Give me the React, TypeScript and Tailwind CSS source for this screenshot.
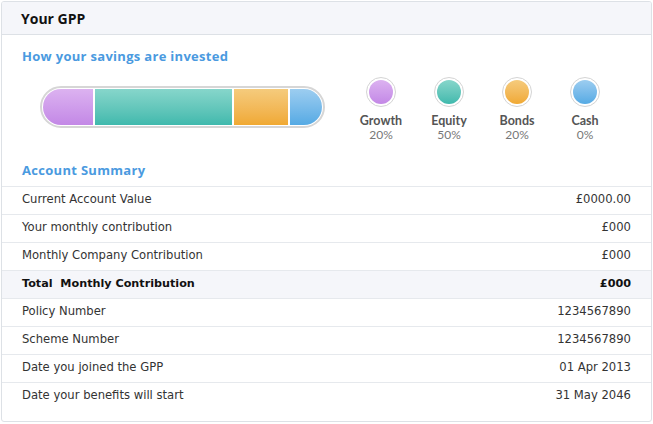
import React from "react";

const segments = [
  { name: "Growth", pct: 20, from: "from-[#dcb2f0]", to: "to-[#c388e6]", w: "w-[50px]" },
  { name: "Equity", pct: 50, from: "from-[#86d6cb]", to: "to-[#3fb9ad]", w: "w-[137px]" },
  { name: "Bonds", pct: 20, from: "from-[#f5cb7c]", to: "to-[#f0a932]", w: "w-[54px]" },
  { name: "Cash", pct: 0, from: "from-[#9ccdf0]", to: "to-[#55aae4]", w: "flex-1" },
];

const rows = [
  { label: "Current Account Value", value: "£0000.00" },
  { label: "Your monthly contribution", value: "£000" },
  { label: "Monthly Company Contribution", value: "£000" },
  { label: "Total  Monthly Contribution", value: "£000", total: true },
  { label: "Policy Number", value: "1234567890" },
  { label: "Scheme Number", value: "1234567890" },
  { label: "Date you joined the GPP", value: "01 Apr 2013" },
  { label: "Date your benefits will start", value: "31 May 2046" },
];

export default function App() {
  return (
    <div className="w-[653px] h-[424px] bg-white p-px font-['Open_Sans',sans-serif]">
      <div className="w-[651px] h-[421px] border border-[#dde1e6] rounded-[3px] overflow-hidden">
        {/* Header */}
        <div className="h-[33px] bg-[#f5f6fa] border-b border-[#dde1e6] flex items-center px-[19px]">
          <span className="text-[14px] font-bold text-[#111] whitespace-pre">Your GPP</span>
        </div>

        <div className="px-[20px] pt-[12px]">
          <h2 className="text-[13px] font-bold text-[#4a9ae0] tracking-[0.3px]">
            How your savings are invested
          </h2>
        </div>

        {/* Allocation */}
        <div className="flex items-start pl-[38px] pt-[9px] h-[90px]">
          <div className="mt-[10px] w-[285px] h-[42px] rounded-full border-2 border-[#d6d6d6] bg-white p-[1px]">
            <div className="flex h-full rounded-full overflow-hidden gap-[2px]">
              {segments.map((s) => (
                <div key={s.name} className={`${s.w} h-full bg-gradient-to-b ${s.from} ${s.to}`} />
              ))}
            </div>
          </div>
          <div className="flex ml-[22px] mt-[1px] font-['Lato',sans-serif]">
            {segments.map((s) => (
              <div key={s.name} className="w-[68px] flex flex-col items-center">
                <div className="w-[30px] h-[30px] rounded-full border border-[#d4d4d4] bg-white p-[2px]">
                  <div className={`w-full h-full rounded-full bg-gradient-to-b ${s.from} ${s.to}`} />
                </div>
                <div className="mt-[6px] text-[12.5px] font-bold text-[#555] leading-[15px]">{s.name}</div>
                <div className="text-[12px] text-[#777] leading-[14px]">{s.pct}%</div>
              </div>
            ))}
          </div>
        </div>

        <div className="px-[20px] h-[29px] flex items-center">
          <h2 className="text-[13px] font-bold text-[#4a9ae0] tracking-[0.3px]">Account Summary</h2>
        </div>

        {/* Summary rows */}
        <div className="font-['DejaVu_Sans',sans-serif]">
          {rows.map((r) => (
            <div
              key={r.label}
              className={`h-[28px] border-t border-[#e6e9ed] flex items-center justify-between pl-[20px] pr-[20px] ${
                r.total ? "bg-[#f5f6fa] font-bold text-[#111] text-[11.2px]" : "text-[#333] text-[11.6px]"
              }`}
            >
              <span className="whitespace-pre">{r.label}</span>
              <span>{r.value}</span>
            </div>
          ))}
        </div>
      </div>
    </div>
  );
}
